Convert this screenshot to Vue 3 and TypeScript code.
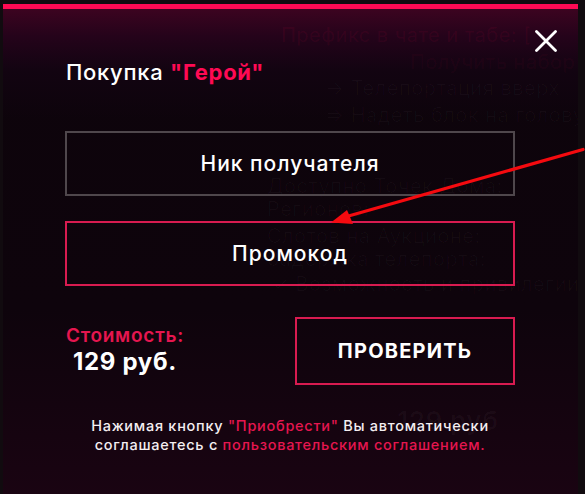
<script setup lang="ts">
const ghostLines: { text: string; cls: string }[] = [
  { text: 'Префикс в чате и табе: [', cls: 'g1' },
  { text: 'Получить набор', cls: 'g2' },
  { text: '→ Телепортация вверх', cls: 'g3' },
  { text: '⇒ Надеть блок на голову', cls: 'g4' },
  { text: 'Доступно Точек Дома:', cls: 'g5' },
  { text: 'Регионов:', cls: 'g6' },
  { text: 'Слотов на Аукционе:', cls: 'g7' },
  { text: 'Задержка телепорта:', cls: 'g8' },
  { text: '✓ Возможность и привилегии н', cls: 'g9' },
  { text: '129 руб', cls: 'g10' },
]
</script>

<template>
  <div class="page">
    <section class="modal">
      <div class="ghost" aria-hidden="true">
        <span v-for="l in ghostLines" :key="l.cls" class="ghost-line" :class="l.cls">{{ l.text }}</span>
      </div>
      <button class="close" aria-label="Закрыть">
        <svg width="22" height="22" viewBox="0 0 22 22">
          <path d="M1.5 1.5 L20.5 20.5 M20.5 1.5 L1.5 20.5" stroke="#fff" stroke-width="2.8" stroke-linecap="round" />
        </svg>
      </button>
      <h2 class="title">Покупка <b>"Герой"</b></h2>
      <div class="field field-grey">Ник получателя</div>
      <div class="field field-pink">Промокод</div>
      <div class="buy">
        <div class="cost">
          <div class="cost-label">Стоимость:</div>
          <div class="cost-value">129 руб.</div>
        </div>
        <button class="check">ПРОВЕРИТЬ</button>
      </div>
      <p class="terms">
        Нажимая кнопку <span>"Приобрести"</span> Вы автоматически<br />
        соглашаетесь с <span>пользовательским соглашением.</span>
      </p>
    </section>
    <svg class="arrow" width="585" height="494" viewBox="0 0 585 494">
      <path d="M583 149.500 L345 217" stroke="#f50a0f" stroke-width="3.200" stroke-linecap="round" fill="none" />
      <path d="M331 222.500 L347 210 L353 224 Z" fill="#f50a0f" />
    </svg>
  </div>
</template>

<style>
html, body { margin: 0; background: #110b0f; }
</style>

<style scoped>
.page {
  position: relative;
  width: 585px;
  height: 494px;
  overflow: hidden;
  padding: 4px 7px 0 3px;
  box-sizing: border-box;
  background: #110b0f;
  font-family: Inter, "Noto Sans", sans-serif;
}
.modal {
  position: relative;
  height: 490px;
  box-sizing: border-box;
  padding: 0 63px 0 62px;
  border-top: 5px solid #ff0a54;
  background:
    linear-gradient(180deg, #3c0420 0, #24031a 28px, #120411 62px, rgba(13,4,11,0) 110px),
    linear-gradient(180deg, #0d040b 0, #0e040c 300px, #1a0412 490px);
  color: #fff;
}
.ghost { position: absolute; inset: 0; overflow: hidden; pointer-events: none; }
.ghost-line {
  position: absolute;
  white-space: nowrap;
  font-size: 20px;
  letter-spacing: 0.5px;
  line-height: 22px;
  color: rgba(255, 255, 255, 0.028);
}
.g1 { left: 278px; top: 15px; color: rgba(255, 10, 84, 0.07); }
.g2 { left: 407px; top: 42px; color: rgba(255, 10, 84, 0.05); }
.g3 { left: 322px; top: 68px; }
.g4 { left: 322px; top: 95px; }
.g5 { left: 264px; top: 166px; }
.g6 { left: 264px; top: 189px; }
.g7 { left: 264px; top: 216px; }
.g8 { left: 264px; top: 239px; }
.g9 { left: 268px; top: 264px; }
.g10 { left: 394px; top: 397px; font-size: 26px; font-weight: 700; line-height: 30px; }
.close {
  position: absolute;
  top: 21px;
  right: 21px;
  width: 22px;
  height: 22px;
  padding: 0;
  border: 0;
  background: none;
  line-height: 0;
}
.title {
  position: relative;
  margin: 0 0 48px;
  padding: 52px 0 0 1px;
  height: 22px;
  font-size: 22px;
  letter-spacing: 0.72px;
  line-height: 22px;
  font-weight: 500;
  white-space: nowrap;
}
.title b { color: #ff0a54; font-weight: 700; }
.field {
  position: relative;
  width: 450px;
  height: 65px;
  margin-bottom: 25px;
  box-sizing: border-box;
  display: flex;
  align-items: center;
  justify-content: center;
  font-size: 21px;
  letter-spacing: 1px;
  font-weight: 500;
}
.field-grey { border: 2px solid #4f474c; }
.field-pink { border: 2px solid #d81b50; }
.buy {
  position: relative;
  display: flex;
  justify-content: space-between;
  align-items: flex-start;
  width: 450px;
  margin-top: 31px;
}
.cost { width: 120px; padding-top: 8px; text-align: center; }
.cost-label { color: #e5164f; font-size: 19px; letter-spacing: 0.75px; line-height: 22px; font-weight: 600; white-space: nowrap; }
.cost-value { font-size: 24px; letter-spacing: 0.7px; line-height: 30px; font-weight: 700; white-space: nowrap; }
.check {
  width: 220px;
  height: 68px;
  box-sizing: border-box;
  border: 2px solid #d81b50;
  background: none;
  color: #fff;
  font: 700 20px Inter, "Noto Sans", sans-serif;
  letter-spacing: 1.2px;
}
.terms {
  position: relative;
  margin: 31px 0 0;
  width: 450px;
  text-align: center;
  font-size: 14.500px;
  letter-spacing: 0.73px;
  line-height: 19px;
  font-weight: 500;
  color: #f4eef1;
  white-space: nowrap;
}
.terms span { color: #e5164f; }
.arrow { position: absolute; left: 0; top: 0; pointer-events: none; }
</style>
